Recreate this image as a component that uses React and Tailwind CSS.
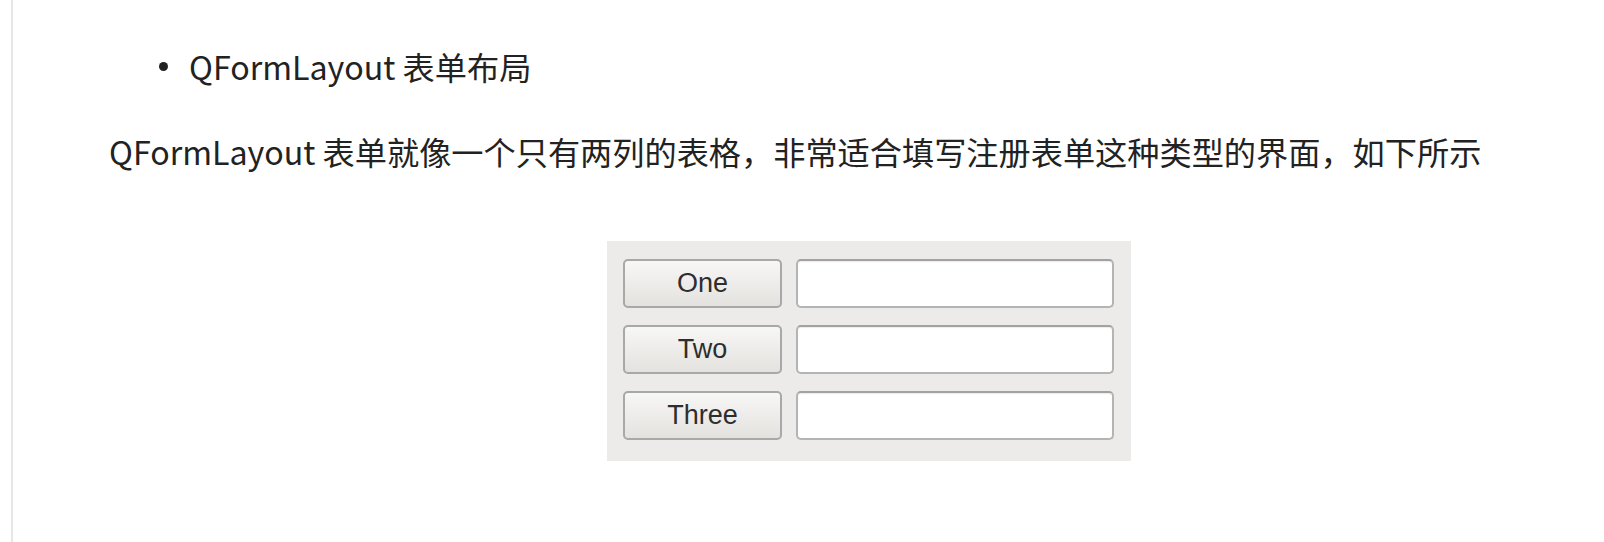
import React from 'react';

const rows = ['One', 'Two', 'Three'];

const App = () => {
  return (
    <section className="w-full min-h-[542px] bg-white flex">
      <div className="w-[11px] shrink-0" />
      <div className="w-[2px] shrink-0 bg-[#e6e6e6] min-h-[542px]" />
      <div
        className="flex-1 pl-[96px] pt-[42px] text-[#222] text-[32.2px]"
        style={{ fontFamily: '"Noto Sans CJK SC", "Noto Sans", sans-serif' }}
      >
        <ul>
          <li className="flex items-center leading-[48px] pl-[50px]">
            <span className="w-[9px] h-[9px] rounded-full bg-[#222] mr-[21px]" />
            <span>QFormLayout 表单布局</span>
          </li>
        </ul>
        <p className="leading-[48px] mt-[37px]">
          QFormLayout 表单就像一个只有两列的表格，非常适合填写注册表单这种类型的界面，如下所示
        </p>

        <div className="ml-[498px] mt-[66px] w-[524px] h-[220px] bg-[#ecebe9] pl-[16px] pt-[18px] flex flex-col gap-[17px]">
          {rows.map((label) => (
            <div key={label} className="flex gap-[14px]">
              <button
                className="w-[159px] h-[49px] rounded-[5px] border-2 border-[#a8a8a8] bg-gradient-to-b from-[#f7f7f6] to-[#e4e2df] text-[#2e2e2e] text-[27px] leading-none"
                style={{ fontFamily: '"Liberation Sans", Arial, sans-serif' }}
              >
                {label}
              </button>
              <div className="w-[318px] h-[49px] rounded-[5px] border-2 border-[#b4b4b4] border-t-[#a2a2a2] bg-white shadow-[inset_0_1px_1px_rgba(0,0,0,0.08)]" />
            </div>
          ))}
        </div>
      </div>
    </section>
  );
};

export default App;
